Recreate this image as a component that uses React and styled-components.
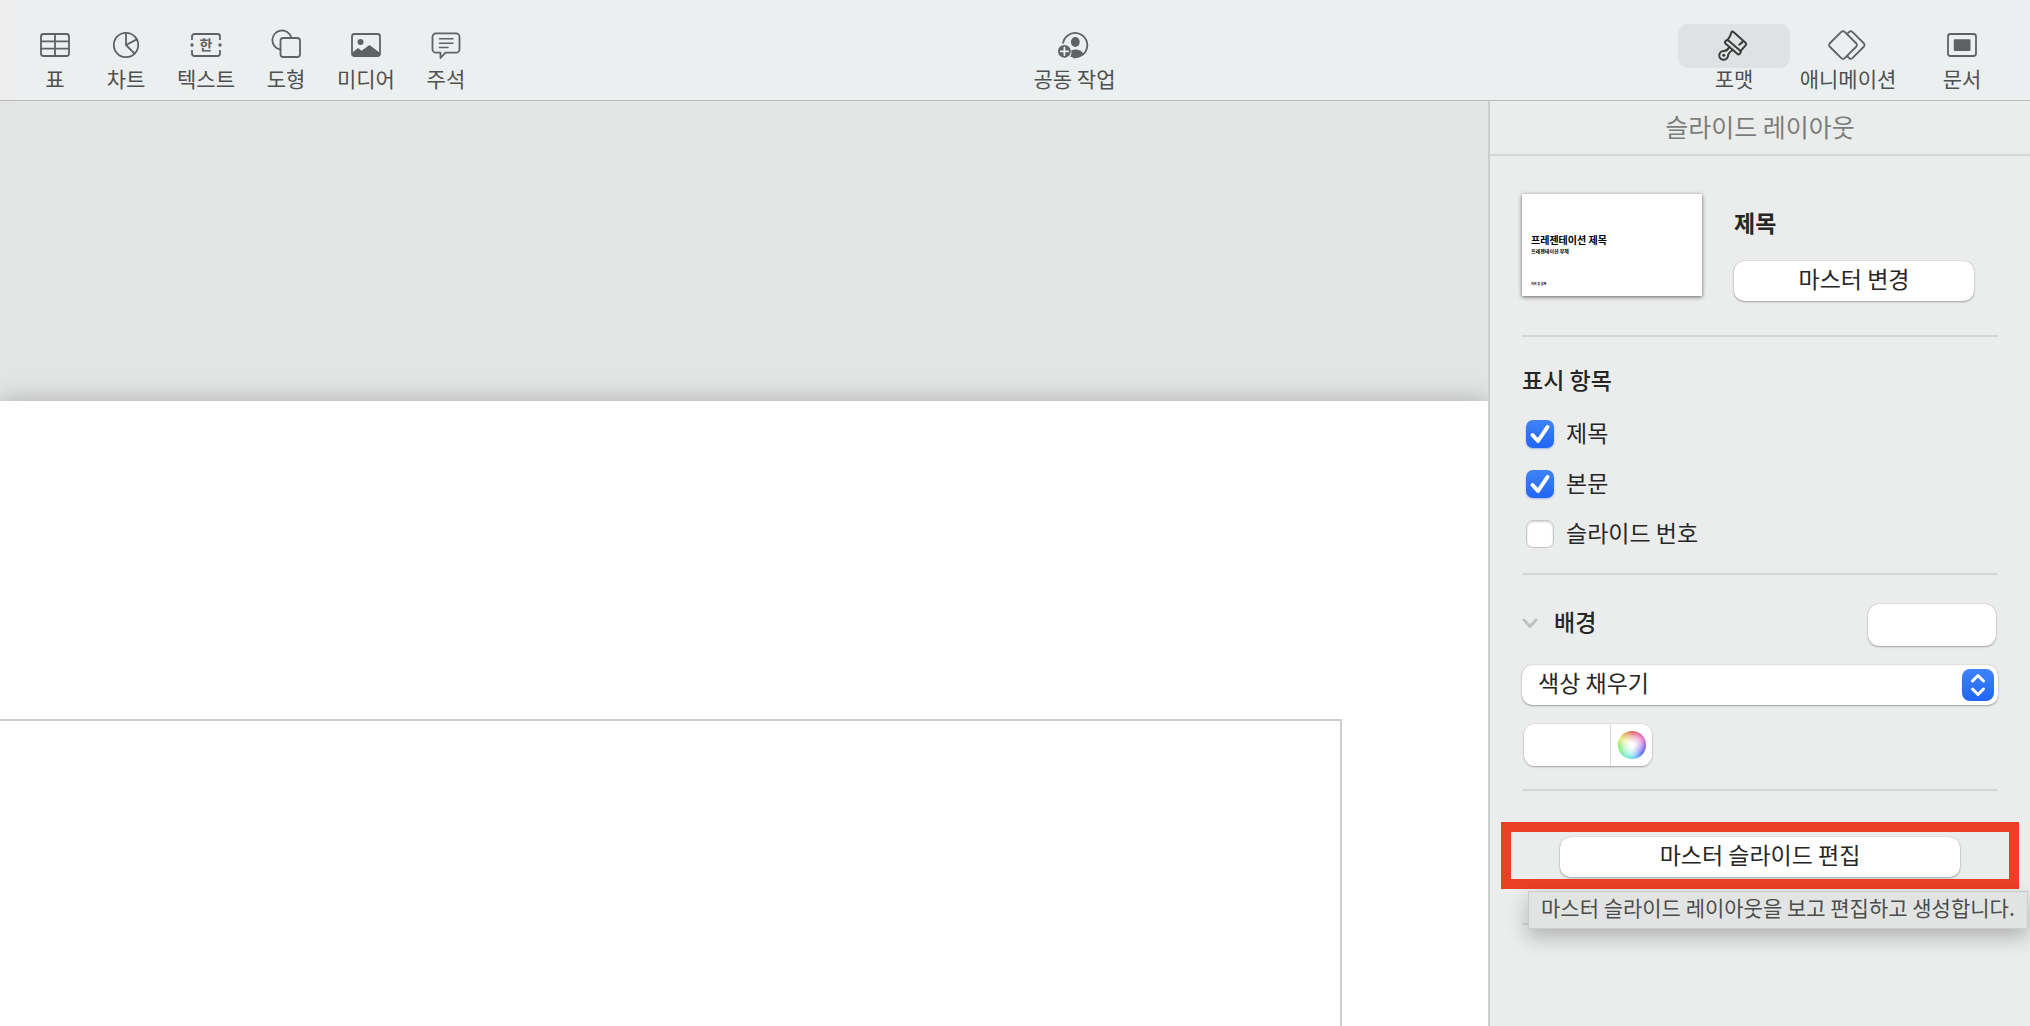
import React, { useState } from "react";
import styled, { createGlobalStyle, css } from "styled-components";

const GlobalStyle = createGlobalStyle`
  *, *::before, *::after { box-sizing: border-box; }
  body {
    margin: 0;
    font-family: "Noto Sans CJK KR", "Liberation Sans", sans-serif;
    color: #262626;
    background: #ebedec;
  }
  button, select, input { font: inherit; color: inherit; }
`;

const Page = styled.div`
  min-height: 100vh;
  display: flex;
  flex-direction: column;
`;

/* ---------- toolbar ---------- */

const Toolbar = styled.header`
  display: flex;
  justify-content: space-between;
  padding: 24px 12px 12px 20px;
  background: linear-gradient(90deg, #ecedec 17px, #ebeff0 17px);
  border-bottom: 1px solid #b9bfc1;
`;

const ToolGroup = styled.div`
  display: flex;
  gap: ${(p) => (p.$wide ? "2px" : "1px")};
  padding-left: ${(p) => (p.$wide ? "10px" : "0")};
`;

const ToolButton = styled.button`
  display: flex;
  flex-direction: column;
  align-items: center;
  min-width: ${(p) => (p.$wide ? "112px" : "70px")};
  padding: 0 ${(p) => (p.$wide ? "0" : "15px")};
  border: 0;
  background: none;
  color: #4f5151;
  font-size: 21px;
  line-height: 20px;
  white-space: nowrap;
`;

const ToolIcon = styled.span`
  display: flex;
  align-items: center;
  justify-content: center;
  align-self: stretch;
  height: 44px;
  padding-bottom: 2px;
  border-radius: 10px;
  color: ${(p) => (p.$active ? "#3a3c3c" : "#5f6262")};
  background: ${(p) => (p.$active ? "#dfe2e3" : "transparent")};

  svg { display: block; overflow: visible; }
`;

const Svg = ({ w = 32, h = 32, weight = 1.8, children }) => (
  <svg
    width={w}
    height={h}
    viewBox={`0 0 ${w} ${h}`}
    fill="none"
    stroke="currentColor"
    strokeWidth={weight}
    strokeLinecap="round"
    strokeLinejoin="round"
    aria-hidden="true"
  >
    {children}
  </svg>
);

const TableIcon = () => (
  <Svg>
    <rect x="2" y="5" width="28" height="22" rx="2.5" />
    <path d="M2 12.3h28M2 19.6h28M16 5v22" />
  </Svg>
);

const ChartIcon = () => (
  <Svg>
    <circle cx="16" cy="16" r="12.2" />
    <path d="M16 3.8V16l8.6 8.6M16 16l10.8-5.6" />
  </Svg>
);

const TextIcon = () => (
  <Svg>
    <path d="M2 11V7.5A2.5 2.5 0 0 1 4.500 5h23A2.500 2.500 0 0 1 30 7.500V11M2 21v3.500A2.500 2.500 0 0 0 4.500 27h23a2.500 2.500 0 0 0 2.500-2.500V21" strokeLinecap="butt" />
    <circle cx="2" cy="16" r="1.700" fill="currentColor" stroke="none" />
    <circle cx="30" cy="16" r="1.700" fill="currentColor" stroke="none" />
    <text x="16" y="21" textAnchor="middle" fontSize="14" fontWeight="700" fill="currentColor" stroke="none">한</text>
  </Svg>
);

const ShapeIcon = () => (
  <Svg>
    <path d="M10.500 20.600A9.600 9.600 0 1 1 21.200 8.500" />
    <rect x="10.500" y="9" width="19.500" height="19" rx="2.800" />
  </Svg>
);

const MediaIcon = () => (
  <Svg>
    <rect x="2" y="5" width="28" height="22" rx="2.500" />
    <circle cx="10.500" cy="13" r="3" fill="currentColor" stroke="none" />
    <path d="M2.500 23.500L8 19l3.500 2.800L19.500 16l10 7.500v2q0 1.500-2 1.500h-23q-2 0-2-1.500z" fill="currentColor" stroke="none" />
  </Svg>
);

const CommentIcon = () => (
  <Svg>
    <path d="M6 4.300h20a3.500 3.500 0 0 1 3.500 3.500v12.400a3.500 3.500 0 0 1-3.500 3.500H15.500L10.500 29v-5.300H6a3.500 3.500 0 0 1-3.500-3.500V7.800A3.500 3.500 0 0 1 6 4.300z" />
    <path d="M9.500 9.800h13.500M9.500 14.200h13.500M9.500 18.600h8.500" strokeWidth="1.500" />
  </Svg>
);

const CollaborateIcon = () => (
  <Svg>
    <path d="M5 14.500A12.200 12.200 0 1 1 15 28.200" strokeLinecap="butt" />
    <ellipse cx="17.300" cy="13" rx="4.400" ry="5" fill="currentColor" stroke="none" />
    <path d="M13.300 21.400q2-.9 4.300-.9 5 0 7.600 3.800-3.300 4.300-8.800 4.300-2.500 0-4.200-1 1.900-3 1.100-6.200z" fill="currentColor" stroke="none" />
    <circle cx="6.400" cy="22.300" r="6.400" fill="currentColor" stroke="none" />
    <path d="M6.400 18.500v7.600M2.600 22.300h7.600" stroke="#ebeff0" />
  </Svg>
);

const FormatIcon = () => (
  <Svg weight={2}>
    <path d="M9.300 11.300q3-3.600 4-7.600.7-2 2.200-.7l12.300 11.100q.9 1 0 2l-5.400 6M25 11.600q-1 2.900-3.800 4" />
    <path d="M10.300 11.400l12 10.300a1.500 1.500 0 0 1 .2 2.100l-.9 1a1.500 1.500 0 0 1-2.100.2L7.400 14.600a1.500 1.500 0 0 1-.1-2.100l.9-1a1.500 1.500 0 0 1 2.100-.1z" />
    <path d="M11.300 18q-1.500 3.600-5.600 4a4.400 4.400 0 1 0 4.200 5.600q0-3.800 4.900-6.600" />
    <circle cx="5.800" cy="26.200" r="1.500" fill="currentColor" stroke="none" />
  </Svg>
);

const AnimateIcon = () => (
  <Svg w={40}>
    <path d="M13.300 2.900q1.700-1.300 3.400 0L28.400 14.500q1.300 1.500 0 3L16.700 29.100q-1.700 1.300-3.400 0L1.600 17.500q-1.300-1.500 0-3z" />
    <path d="M19.400 4.700l1.800-1.800q1.600-1.300 3.200 0l11.600 11.600q1.300 1.500 0 3L24.400 29.100q-1.600 1.300-3.200 0l-1.800-1.800" />
  </Svg>
);

const DocumentIcon = () => (
  <Svg>
    <rect x="2" y="5" width="28" height="22" rx="2.500" />
    <rect x="7.800" y="10.300" width="16.700" height="11.600" rx="1" fill="currentColor" stroke="none" />
  </Svg>
);

const insertTools = [
  ["표", TableIcon],
  ["차트", ChartIcon],
  ["텍스트", TextIcon],
  ["도형", ShapeIcon],
  ["미디어", MediaIcon],
  ["주석", CommentIcon],
];

const panelTools = [
  ["포맷", FormatIcon],
  ["애니메이션", AnimateIcon],
  ["문서", DocumentIcon],
];

function Tool({ label, icon: Icon, wide, active }) {
  return (
    <ToolButton type="button" $wide={wide}>
      <ToolIcon $active={active}>
        <Icon />
      </ToolIcon>
      {label}
    </ToolButton>
  );
}

/* ---------- canvas ---------- */

const Workspace = styled.div`
  flex: 1;
  display: flex;
`;

const Canvas = styled.main`
  flex: 1;
  display: flex;
  flex-direction: column;
  padding-top: 300px;
  overflow: hidden;
  background: #e3e5e4;
`;

const Slide = styled.section`
  flex: 1;
  display: flex;
  padding: 318px 146px 0 0;
  background: #fff;
  box-shadow: 0 0 24px rgba(0, 0, 0, 0.25);
`;

const Placeholder = styled.div`
  flex: 1;
  border: solid #cdcfce;
  border-width: 2px 2px 0 0;
`;

/* ---------- inspector ---------- */

const Inspector = styled.aside`
  width: 542px;
  border-left: 2px solid #cdcfce;
  background: #ebedec;
`;

const InspectorTitle = styled.h1`
  margin: 0;
  padding: 9px 0 12px;
  border-bottom: 2px solid #d5d7d6;
  color: #7b7d7c;
  font-size: 25px;
  font-weight: 400;
  line-height: 32px;
  text-align: center;
`;

const Section = styled.section`
  display: flex;
  flex-direction: column;
  gap: ${(p) => p.$gap || "0"};
  margin: 0 32px;
  padding: ${(p) => p.$pad};
  border-bottom: 2px solid #d5d7d6;
`;

const Heading = styled.h2`
  margin: 0;
  padding-bottom: 4px;
  font-size: 23px;
  font-weight: ${(p) => (p.$strong ? 700 : 500)};
  line-height: 28px;
`;

const raised = css`
  border: 0;
  background: #fff;
  box-shadow: 0 0 1px rgba(0, 0, 0, 0.35), 0 1px 2px rgba(0, 0, 0, 0.3);
`;

const PushButton = styled.button`
  ${raised}
  width: 100%;
  height: 40px;
  padding: 0 0 6px;
  border-radius: 10px;
  font-size: 23px;
  line-height: 34px;
`;

const MasterRow = styled.div`
  display: flex;
  gap: 32px;
  padding-right: 24px;
`;

const Thumbnail = styled.div`
  display: flex;
  flex-direction: column;
  width: 180px;
  height: 102px;
  padding: 39px 9px 0;
  background: #fff;
  box-shadow: 0 1px 4px rgba(0, 0, 0, 0.6);
  color: #000;
`;

const ThumbTitle = styled.strong`
  font-size: 10px;
  line-height: 14px;
`;

const ThumbSubtitle = styled.span`
  font-size: 5px;
  font-weight: 700;
  line-height: 8px;
`;

const ThumbAuthor = styled.span`
  margin: auto 0 9px;
  font-size: 3px;
  font-weight: 700;
  line-height: 6px;
`;

const MasterInfo = styled.div`
  flex: 1;
  display: flex;
  flex-direction: column;
  gap: 21px;
  padding-top: 14px;
`;

const CheckList = styled.div`
  display: flex;
  flex-direction: column;
  gap: 18px;
  padding-left: 4px;
`;

const CheckLabel = styled.label`
  display: flex;
  align-items: center;
  gap: 12px;
  font-size: 23px;
  line-height: 32px;
`;

const CheckText = styled.span`
  padding-bottom: 4px;
  line-height: 28px;
`;

const CheckMark = styled.span`
  display: grid;
  width: 28px;
  height: 28px;

  > * { grid-area: 1 / 1; }
  svg { pointer-events: none; }
`;

const CheckInput = styled.input`
  appearance: none;
  width: 28px;
  height: 28px;
  margin: 0;
  border: 1px solid #c6c8c7;
  border-radius: 7px;
  background: #fff;
  box-shadow: inset 0 1px 2px rgba(0, 0, 0, 0.2);

  &:checked {
    border: 0;
    background: linear-gradient(#4083f7, #2066f5);
    box-shadow: 0 1px 2px rgba(32, 102, 245, 0.4);
  }
`;

const BackgroundHead = styled.div`
  display: flex;
  align-items: center;
  justify-content: space-between;
  padding-right: 2px;
`;

const Disclosure = styled.button`
  display: flex;
  align-items: center;
  gap: 16px;
  padding: 0 0 4px;
  border: 0;
  background: none;
  text-align: left;
`;

const Swatch = styled.button`
  ${raised}
  width: 128px;
  height: 42px;
  padding: 0;
  border-radius: 11px;
`;

const SelectBox = styled.div`
  ${raised}
  display: grid;
  align-items: center;
  height: 40px;
  border-radius: 10px;

  > * { grid-area: 1 / 1; }
`;

const FillSelect = styled.select`
  appearance: none;
  width: 100%;
  height: 40px;
  padding: 0 48px 6px 16px;
  border: 0;
  border-radius: 10px;
  background: transparent;
  font-size: 23px;
`;

const Stepper = styled.span`
  display: flex;
  align-items: center;
  justify-content: center;
  justify-self: end;
  width: 32px;
  height: 32px;
  margin-right: 4px;
  border-radius: 8px;
  background: linear-gradient(#4083f7, #2066f5);
  pointer-events: none;
`;

const ColorWell = styled.div`
  ${raised}
  display: flex;
  width: 128px;
  height: 42px;
  margin-left: 2px;
  border-radius: 11px;
  overflow: hidden;
`;

const ColorChip = styled.button`
  flex: 1;
  padding: 0;
  border: 0;
  border-right: 1px solid #d8d8d8;
  background: #fff;
`;

const WheelButton = styled.button`
  display: flex;
  align-items: center;
  justify-content: center;
  width: 41px;
  padding: 0;
  border: 0;
  background: #fff;
`;

const Wheel = styled.span`
  width: 28px;
  height: 28px;
  border-radius: 50%;
  background:
    radial-gradient(circle, #fff 12%, rgba(255, 255, 255, 0.6) 45%, rgba(255, 255, 255, 0) 76%),
    conic-gradient(#dc4a40, #e052c8 60deg, #7a45e8 100deg, #3a4cf0 130deg, #52c8f4 170deg, #5ce8d0 200deg, #6ee85c 260deg, #dce850 300deg, #dc4a40);
`;

const EditSection = styled(Section)`
  position: relative;
`;

const Highlight = styled.div`
  margin: 0 -21px;
  padding: 5px 49px 2px;
  border: 10px solid #ea4026;
`;

const Tooltip = styled.div`
  position: absolute;
  top: 100px;
  left: 6px;
  padding: 0 12px 6px;
  border: 1px solid #cbcdcc;
  background: #e2e4e3;
  box-shadow: 0 8px 20px rgba(0, 0, 0, 0.25);
  color: #4b4d4c;
  font-size: 21px;
  line-height: 30px;
  white-space: nowrap;
`;

function CheckItem({ label, initial }) {
  const [on, setOn] = useState(initial);
  return (
    <CheckLabel>
      <CheckMark>
        <CheckInput type="checkbox" checked={on} onChange={() => setOn(!on)} />
        {on && (
          <svg width="28" height="28" viewBox="0 0 28 28" fill="none" stroke="#fff" strokeWidth="4" strokeLinecap="round" strokeLinejoin="round" aria-hidden="true">
            <path d="M6.500 15l5.500 6L21.500 7" />
          </svg>
        )}
      </CheckMark>
      <CheckText>{label}</CheckText>
    </CheckLabel>
  );
}

export default function App() {
  return (
    <Page>
      <GlobalStyle />
      <Toolbar>
        <ToolGroup>
          {insertTools.map(([label, icon]) => (
            <Tool key={label} label={label} icon={icon} />
          ))}
        </ToolGroup>
        <ToolGroup>
          <Tool label="공동 작업" icon={CollaborateIcon} />
        </ToolGroup>
        <ToolGroup $wide>
          {panelTools.map(([label, icon], i) => (
            <Tool key={label} label={label} icon={icon} wide active={i === 0} />
          ))}
        </ToolGroup>
      </Toolbar>

      <Workspace>
        <Canvas>
          <Slide>
            <Placeholder />
          </Slide>
        </Canvas>

        <Inspector>
          <InspectorTitle>슬라이드 레이아웃</InspectorTitle>

          <Section $pad="38px 0 34px">
            <MasterRow>
              <Thumbnail>
                <ThumbTitle>프레젠테이션 제목</ThumbTitle>
                <ThumbSubtitle>프레젠테이션 부제</ThumbSubtitle>
                <ThumbAuthor>저자 및 날짜</ThumbAuthor>
              </Thumbnail>
              <MasterInfo>
                <Heading $strong>제목</Heading>
                <PushButton type="button">마스터 변경</PushButton>
              </MasterInfo>
            </MasterRow>
          </Section>

          <Section $pad="28px 0 23px" $gap="21px">
            <Heading>표시 항목</Heading>
            <CheckList>
              <CheckItem label="제목" initial />
              <CheckItem label="본문" initial />
              <CheckItem label="슬라이드 번호" initial={false} />
            </CheckList>
          </Section>

          <Section $pad="29px 0 23px" $gap="19px">
            <BackgroundHead>
              <Disclosure type="button" aria-expanded="true">
                <svg width="16" height="12" viewBox="0 0 16 12" fill="none" stroke="#bfc1c0" strokeWidth="3" strokeLinecap="round" strokeLinejoin="round" aria-hidden="true">
                  <path d="M2 3l6 6.500L14 3" />
                </svg>
                <Heading as="span">배경</Heading>
              </Disclosure>
              <Swatch type="button" aria-label="배경 색상" />
            </BackgroundHead>
            <SelectBox>
              <FillSelect aria-label="채우기 유형" defaultValue="색상 채우기">
                <option>색상 채우기</option>
              </FillSelect>
              <Stepper>
                <svg width="16" height="24" viewBox="0 0 16 24" fill="none" stroke="#fff" strokeWidth="3" strokeLinecap="round" strokeLinejoin="round" aria-hidden="true">
                  <path d="M2.500 8L8 2.500 13.500 8M2.500 16L8 21.500l5.500-5.500" />
                </svg>
              </Stepper>
            </SelectBox>
            <ColorWell>
              <ColorChip type="button" aria-label="채우기 색상" />
              <WheelButton type="button" aria-label="색상 선택">
                <Wheel />
              </WheelButton>
            </ColorWell>
          </Section>

          <EditSection $pad="31px 0 34px">
            <Highlight>
              <PushButton type="button">마스터 슬라이드 편집</PushButton>
            </Highlight>
            <Tooltip role="tooltip">마스터 슬라이드 레이아웃을 보고 편집하고 생성합니다.</Tooltip>
          </EditSection>
        </Inspector>
      </Workspace>
    </Page>
  );
}
